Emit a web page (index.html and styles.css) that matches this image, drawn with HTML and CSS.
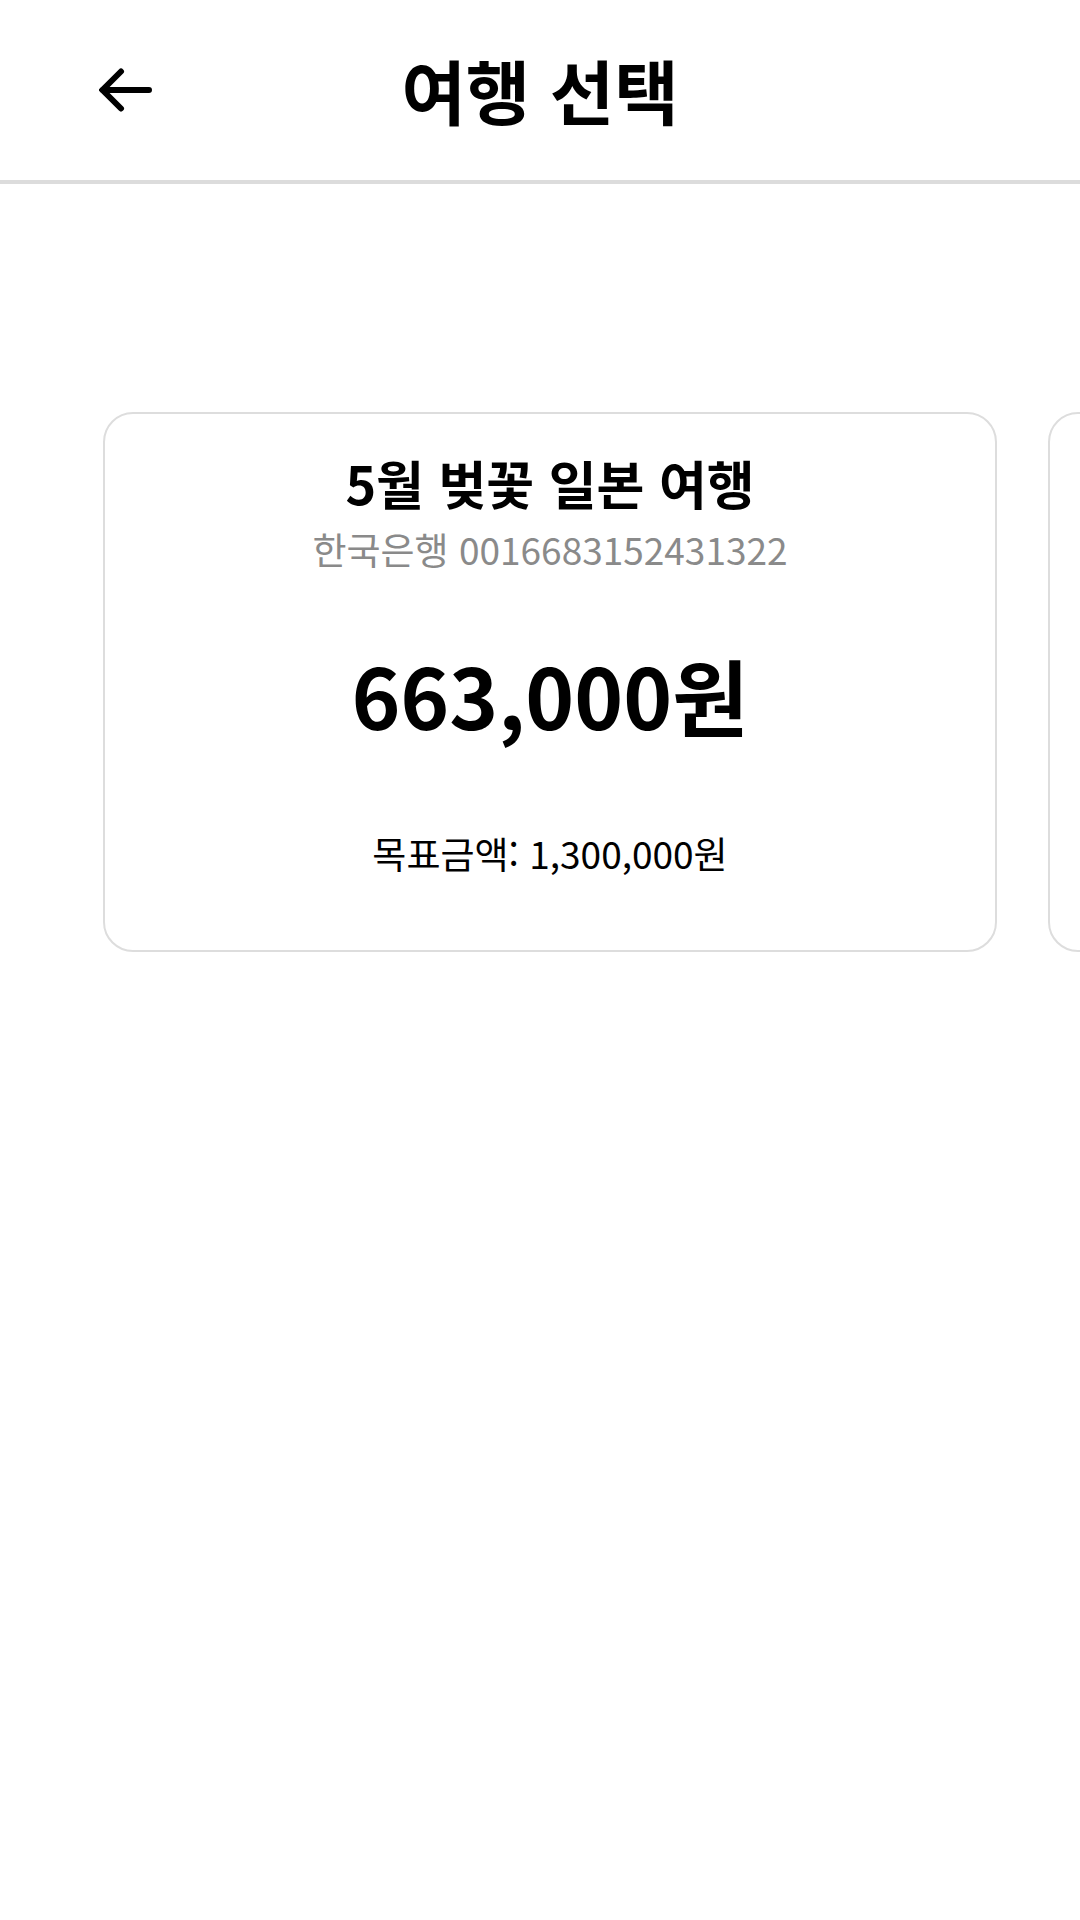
FILE: index.html
```html
<!DOCTYPE html>
<html lang="ko">
<head>
<meta charset="utf-8">
<title>여행 선택</title>
<link rel="stylesheet" href="styles.css">
</head>
<body>
<header class="topbar">
  <div class="back">
    <svg width="54" height="44" viewBox="0 0 54 44" aria-hidden="true">
      <path d="M3.5 22 H50 M22 3.5 L3.5 22 L22 40.5" fill="none" stroke="#000" stroke-width="6" stroke-linecap="round" stroke-linejoin="miter"/>
    </svg>
  </div>
  <h1 class="title">여행 선택</h1>
  <div></div>
</header>
<main class="content">
  <div class="slider">
    <section class="card">
      <div class="card-title">5월 벚꽃 일본 여행</div>
      <div class="bank">한국은행 0016683152431322</div>
      <div class="amount">663,000원</div>
      <div class="target">목표금액: 1,300,000원</div>
    </section>
    <section class="card">
      <div class="card-title">&nbsp;</div>
    </section>
  </div>
</main>
</body>
</html>
```
FILE: styles.css
```css
html, body {
  margin: 0;
  padding: 0;
  background: #fff;
}
body {
  width: 1080px;
  height: 1920px;
  overflow: hidden;
  font-family: "Noto Sans CJK KR", "Noto Sans", sans-serif;
  color: #000;
}
.topbar {
  height: 180px;
  border-bottom: 4px solid #dcdcdc;
  display: grid;
  grid-template-columns: 1fr auto 1fr;
  align-items: center;
}
.back {
  padding-left: 99px;
  display: flex;
  align-items: center;
  padding-top: 0;
}
.title {
  margin: 0;
  font-size: 70px;
  font-weight: 700;
  line-height: 1;
  padding-top: 0;
}
.content {
  padding-top: 228px;
}
.slider {
  display: flex;
  gap: 51px;
  padding-left: 103px;
  overflow: hidden;
}
.card {
  flex: 0 0 auto;
  width: 890px;
  border: 2px solid #dddddd;
  border-radius: 30px;
  padding: 36px 0 72px;
  text-align: center;
  box-sizing: content-box;
}
.card-title {
  font-size: 52px;
  font-weight: 700;
  line-height: 66px;
}
.bank {
  margin-top: 8px;
  font-size: 37px;
  line-height: 50px;
  color: #8a8a8a;
}
.amount {
  margin-top: 70px;
  font-size: 83px;
  font-weight: 700;
  line-height: 100px;
}
.target {
  margin-top: 84px;
  font-size: 37px;
  line-height: 50px;
}
```
